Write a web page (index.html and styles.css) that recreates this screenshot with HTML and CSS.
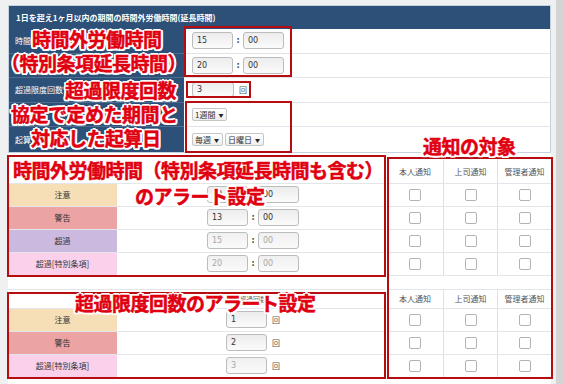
FILE: index.html
```html
<!DOCTYPE html>
<html lang="ja">
<head>
<meta charset="utf-8">
<title>時間外労働時間設定</title>
<link rel="stylesheet" href="styles.css">
</head>
<body>
<div class="screen">
  <div class="panel">
    <section class="card">
      <div class="thead">1日を超え1ヶ月以内の期間の時間外労働時間(延長時間)</div>
      <div class="trow">
        <div class="tlabel">時間外労働時間</div>
        <div class="tval"><span class="inp">15</span><span class="colon">:</span><span class="inp">00</span></div>
      </div>
      <div class="trow">
        <div class="tlabel">特別条項延長時間</div>
        <div class="tval"><span class="inp">20</span><span class="colon">:</span><span class="inp">00</span></div>
      </div>
      <div class="trow">
        <div class="tlabel">超過限度回数</div>
        <div class="tval"><span class="inp short">3</span><span class="unit">回</span></div>
      </div>
      <div class="trow">
        <div class="tlabel">期間</div>
        <div class="tval"><span class="sel">1週間<i class="arw">▼</i></span></div>
      </div>
      <div class="trow">
        <div class="tlabel">起算日</div>
        <div class="tval"><span class="sel">毎週<i class="arw">▼</i></span><span class="sel">日曜日<i class="arw">▼</i></span></div>
      </div>
    </section>

    <section class="block b1">
      <div class="alert">
        <div class="arow head"></div>
        <div class="arow"><div class="lab caution">注意</div><div class="val"><span class="inp">10</span><span class="colon">:</span><span class="inp">00</span></div></div>
        <div class="arow"><div class="lab warning">警告</div><div class="val"><span class="inp">13</span><span class="colon">:</span><span class="inp">00</span></div></div>
        <div class="arow"><div class="lab over">超過</div><div class="val"><span class="inp off">15</span><span class="colon">:</span><span class="inp off">00</span></div></div>
        <div class="arow"><div class="lab special">超過[特別条項]</div><div class="val"><span class="inp off">20</span><span class="colon">:</span><span class="inp off">00</span></div></div>
      </div>
      <div class="notify">
        <div class="nrow head"><div class="nc">本人通知</div><div class="nc">上司通知</div><div class="nc">管理者通知</div></div>
        <div class="nrow"><div class="nc"><span class="chk"></span></div><div class="nc"><span class="chk"></span></div><div class="nc"><span class="chk"></span></div></div>
        <div class="nrow"><div class="nc"><span class="chk"></span></div><div class="nc"><span class="chk"></span></div><div class="nc"><span class="chk"></span></div></div>
        <div class="nrow"><div class="nc"><span class="chk"></span></div><div class="nc"><span class="chk"></span></div><div class="nc"><span class="chk"></span></div></div>
        <div class="nrow"><div class="nc"><span class="chk"></span></div><div class="nc"><span class="chk"></span></div><div class="nc"><span class="chk"></span></div></div>
      </div>
    </section>

    <section class="block b2">
      <div class="alert">
        <div class="arow spacer"></div>
        <div class="arow head"><div class="lab"></div><div class="val htext">超過回数</div></div>
        <div class="arow"><div class="lab caution">注意</div><div class="val"><span class="inp">1</span><span class="unit">回</span></div></div>
        <div class="arow"><div class="lab warning">警告</div><div class="val"><span class="inp">2</span><span class="unit">回</span></div></div>
        <div class="arow"><div class="lab special">超過[特別条項]</div><div class="val"><span class="inp off">3</span><span class="unit">回</span></div></div>
      </div>
      <div class="notify">
        <div class="nrow spacer"></div>
        <div class="nrow head"><div class="nc">本人通知</div><div class="nc">上司通知</div><div class="nc">管理者通知</div></div>
        <div class="nrow"><div class="nc"><span class="chk"></span></div><div class="nc"><span class="chk"></span></div><div class="nc"><span class="chk"></span></div></div>
        <div class="nrow"><div class="nc"><span class="chk"></span></div><div class="nc"><span class="chk"></span></div><div class="nc"><span class="chk"></span></div></div>
        <div class="nrow"><div class="nc"><span class="chk"></span></div><div class="nc"><span class="chk"></span></div><div class="nc"><span class="chk"></span></div></div>
      </div>
    </section>
  </div>
  <div class="scrollbar"></div>

  <div class="frame f1"></div>
  <div class="frame f2"></div>
  <div class="frame f3"></div>
  <div class="frame f4"></div>
  <div class="frame f5"></div>
  <div class="frame f6"></div>

  <div class="note n1">時間外労働時間</div>
  <div class="note n2">（特別条項延長時間）</div>
  <div class="note n3">超過限度回数</div>
  <div class="note n4">協定で定めた期間と</div>
  <div class="note n5">対応した起算日</div>
  <div class="note n6">通知の対象</div>
  <div class="note n7">時間外労働時間（特別条項延長時間も含む）</div>
  <div class="note n8">のアラート設定</div>
  <div class="note n9">超過限度回数のアラート設定</div>
</div>
</body>
</html>
```

FILE: styles.css
```css
* { box-sizing: border-box; }

body {
  margin: 0;
  background: #eef0f2;
}

.screen {
  position: relative;
  width: 564px;
  height: 384px;
  overflow: hidden;
  display: flex;
  font-family: "Noto Sans CJK JP", "Noto Sans", sans-serif;
  background: #eef0f2;
}

.panel {
  width: 543px;
  margin: 5px 0 0 8px;
  background: #fff;
  flex: none;
}

.scrollbar {
  width: 8px;
  margin-left: 5px;
  background: #d4d4d4;
  flex: none;
}

/* top card */
.card {
  border: 1px solid #c7d1dc;
}

.thead {
  height: 23px;
  background: #2c5078;
  color: #fff;
  font-size: 8px;
  font-weight: 700;
  padding-left: 7px;
  display: flex;
  align-items: center;
}

.trow {
  display: flex;
  height: 24.6px;
}

.tlabel {
  width: 175px;
  flex: none;
  background: #2c5078;
  color: #fff;
  font-size: 8px;
  padding-left: 6px;
  display: flex;
  align-items: center;
  border-bottom: 1px solid #4c6d90;
  white-space: nowrap;
  overflow: hidden;
}

.tval {
  flex: 1;
  display: flex;
  align-items: center;
  padding-left: 8px;
  border-bottom: 1px solid #dfe4ea;
}

.trow:last-child .tlabel,
.trow:last-child .tval {
  border-bottom: none;
}

/* form bits */
.inp {
  width: 41px;
  height: 17px;
  border: 1px solid #bcbcbc;
  border-radius: 3px;
  background: linear-gradient(#ececec, #fbfbfb);
  font-family: "DejaVu Sans", sans-serif;
  font-size: 8px;
  color: #333;
  padding-left: 4px;
  display: flex;
  align-items: center;
  flex: none;
}

.inp.short {
  height: 15px;
  width: 42px;
}

.inp.off {
  color: #a8a8a8;
  background: linear-gradient(#f0f0f0, #fafafa);
}

.colon {
  width: 10px;
  text-align: center;
  font-size: 8px;
  color: #444;
  font-family: "DejaVu Sans", sans-serif;
  font-weight: 700;
}

.unit {
  font-size: 8px;
  color: #555;
  margin-left: 5px;
}

.sel {
  height: 13px;
  border: 1px solid #c6c6c6;
  border-radius: 2px;
  background: linear-gradient(#ffffff, #eeeeee);
  font-size: 8px;
  color: #333;
  padding: 0 3px 0 2px;
  display: flex;
  align-items: center;
  margin-right: 2px;
  line-height: 1;
}

.arw {
  font-style: normal;
  font-size: 5px;
  margin-left: 3px;
  color: #222;
}

/* lower blocks */
.block {
  display: flex;
  gap: 2px;
}

.b1 {
  margin-top: 2px;
}

.alert {
  width: 377px;
  flex: none;
}

.notify {
  width: 164px;
  flex: none;
}

.arow, .nrow {
  display: flex;
  height: 23px;
  border-bottom: 1px solid #e2e6ea;
}

.b1 .head {
  height: 29px;
}

.b2 .spacer {
  height: 14px;
}

.b2 .head {
  height: 19px;
}

.lab {
  width: 109px;
  flex: none;
  display: flex;
  align-items: center;
  justify-content: center;
  font-size: 8px;
  color: #333;
}

.lab.caution { background: #f6dfb6; }
.lab.warning { background: #eca3a3; }
.lab.over { background: #cbb9e0; }
.lab.special { background: #fbd0ea; }

.val {
  flex: 1;
  display: flex;
  align-items: center;
  justify-content: center;
  padding-left: 4px;
}

.htext {
  font-size: 7px;
  color: #666;
}

.nc {
  width: 54px;
  flex: none;
  display: flex;
  align-items: center;
  justify-content: center;
  border-left: 1px solid #dde2e8;
  font-size: 8px;
  color: #555;
}

.nc:first-child {
  width: 56px;
  border-left: none;
}

.b1 .nrow.head .nc {
  align-items: flex-end;
  padding-bottom: 6px;
}

.chk {
  width: 12px;
  height: 12px;
  border: 1px solid #b3b3b3;
  border-radius: 2px;
  background: #fff;
}

/* annotation frames */
.frame {
  position: absolute;
  border: 2px solid #b70d10;
}

.f1 { left: 184px; top: 26px; width: 108px; height: 51px; }
.f2 { left: 186px; top: 81px; width: 65px; height: 17px; }
.f3 { left: 185px; top: 101px; width: 107px; height: 52px; }
.f4 { left: 7px; top: 155px; width: 379px; height: 122px; }
.f5 { left: 387px; top: 157px; width: 166px; height: 222px; }
.f6 { left: 7px; top: 292px; width: 379px; height: 87px; }

/* annotation texts */
.note {
  position: absolute;
  font-size: 19px;
  line-height: 20px;
  letter-spacing: -0.5px;
  font-weight: 700;
  color: #e00010;
  -webkit-text-stroke: 0.5px #e00010;
  white-space: nowrap;
  text-shadow:
    2px 0 #fff, -2px 0 #fff, 0 2px #fff, 0 -2px #fff,
    1.5px 1.5px #fff, -1.5px 1.5px #fff, 1.5px -1.5px #fff, -1.5px -1.5px #fff,
    2px 1px #fff, -2px 1px #fff, 2px -1px #fff, -2px -1px #fff;
}

.n1 { left: 32px; top: 29px; }
.n2 { left: 1px; top: 53px; }
.n3 { left: 65px; top: 80px; }
.n4 { left: 11px; top: 104px; }
.n5 { left: 31px; top: 128px; }
.n6 { left: 423px; top: 136px; }
.n7 { left: 13px; top: 160px; }
.n8 { left: 135px; top: 186px; }
.n9 { left: 75px; top: 293px; }
```
